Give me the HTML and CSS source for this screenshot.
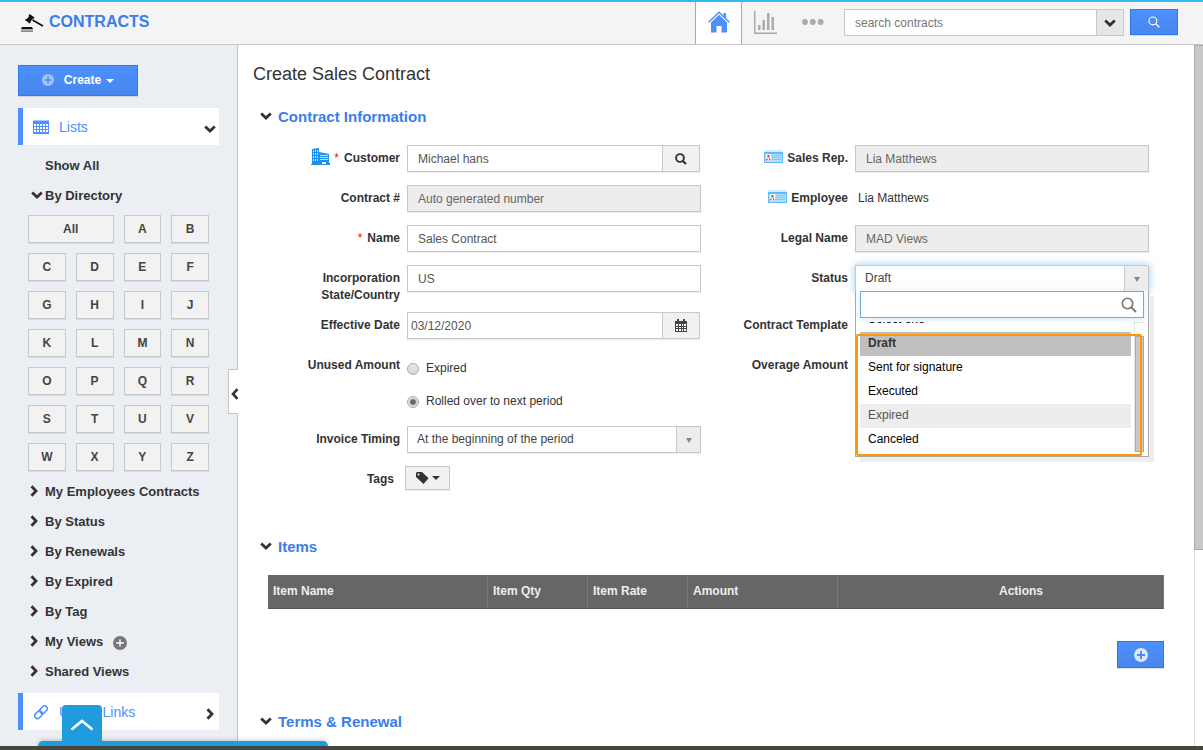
FILE: index.html
```html
<!DOCTYPE html>
<html lang="en">
<head>
<meta charset="utf-8">
<title>Contracts - Create Sales Contract</title>
<link rel="stylesheet" href="styles.css">
</head>
<body>
<svg class="sprite" aria-hidden="true">
  <symbol id="chev-down" viewBox="0 0 12 8"><path d="M1.2 1.5 6 6 10.8 1.5" fill="none" stroke="currentColor" stroke-width="2.8"/></symbol>
  <symbol id="chev-right" viewBox="0 0 8 12"><path d="M1.5 1.2 6 6 1.5 10.8" fill="none" stroke="currentColor" stroke-width="2.8"/></symbol>
  <symbol id="plus" viewBox="0 0 14 14"><path fill-rule="evenodd" fill="currentColor" d="M7 0a7 7 0 1 1 0 14A7 7 0 0 1 7 0zM6 3v3H3v2h3v3h2V8h3V6H8V3z"/></symbol>
  <symbol id="plus-thin" viewBox="0 0 14 14"><circle cx="7" cy="7" r="7" fill="currentColor"/><path d="M7 3.200v7.600M3.200 7h7.600" stroke="#fff" stroke-width="1.300"/></symbol>
  <symbol id="lens" viewBox="0 0 16 16"><circle cx="6.5" cy="6.5" r="5.2" fill="none" stroke="currentColor" stroke-width="1.6"/><path d="m10.5 10.5 4.5 4.5" stroke="currentColor" stroke-width="1.8"/></symbol>
  <symbol id="card" viewBox="0 0 19 13">
    <path fill="#d6eefc" d="M0 0h19v3H0z"/><path fill="#5bbcff" d="M0 2h19v11H0z"/><path fill="#aee0ff" d="M1 4h17v8H1z"/>
    <path fill="#fff" d="M2 4h5v7H2z"/><path fill="#b5504a" d="M3.500 5h2v2h-2zM2 9h1.500v1.500H2zM5 9h1.500v1.500H5z"/><path fill="#e6b8a8" d="M3 7h3v2H3z"/>
    <path fill="#7cc8fb" d="M8 5h9v1H8zM8 7h9v1H8zM8 9h9v1H8z"/>
  </symbol>
</svg>
<div class="app">
  <header class="topbar">
    <a class="brand" href="#">
      <svg width="24" height="19" viewBox="0 0 24 19" aria-hidden="true"><path fill="#111" d="m9.500 1 5 3.500-1 1.500-.8-.3-2.200 3 .2.800-1 1-4.700-3.500 1-1.300.9.200L9 3.200l-.3-1z"/><path d="m12.500 7 10.500 6" stroke="#111" stroke-width="1.800"/><path fill="#111" d="M2 14h10l1 2H1z"/><path fill="#aaa" d="M1 16h12v2H1z"/><path fill="#444" d="M1 18h12v.6H1z"/></svg>
      <span>CONTRACTS</span>
    </a>
    <nav class="tabs">
      <a class="tab tab-home" href="#" aria-label="Home"><svg width="22" height="22" viewBox="0 0 22 22"><path fill="#4d90fe" d="M11 3.500 19 11v10.500h-5.500V15h-5v6.500H3V11zM15.500 2H18v6l-2.500-2.400z"/><path fill="none" stroke="#4d90fe" stroke-width="1.500" d="M.6 11.200 11 1.200l10.400 10"/><path fill="none" stroke="#fff" d="M1.500 12.500 11 3.200l9.500 9.300"/></svg></a>
      <a class="tab" href="#" aria-label="Reports"><svg width="23" height="24" viewBox="0 0 23 24"><path fill="#aaa" d="M0 1h1.500v21.500H23V24H0zM4 15h2.500v5H4zM8.500 10H11v10H8.500zM13 3h2.500v17H13zM17.500 7H20v13h-2.500z"/></svg></a>
      <a class="tab" href="#" aria-label="More"><svg width="22" height="6" viewBox="0 0 22 6" fill="#aaa"><circle cx="3" cy="3" r="2.900"/><circle cx="10.800" cy="3" r="2.900"/><circle cx="18.600" cy="3" r="2.900"/></svg></a>
    </nav>
    <form class="search">
      <input class="search-input" type="text" placeholder="search contracts" aria-label="Search contracts">
      <button class="search-more" type="button" aria-label="Search options"><svg width="12" height="8"><use href="#chev-down"/></svg></button>
      <button class="btn-blue search-go" type="button" aria-label="Search"><svg width="12" height="12"><use href="#lens"/></svg></button>
    </form>
  </header>

  <div class="body">
    <aside class="sidebar">
      <button class="btn-blue create" type="button"><svg class="faded" width="12" height="12"><use href="#plus"/></svg><span>Create</span><i class="caret"></i></button>
      <a class="panel-link" href="#"><svg width="16" height="14" viewBox="0 0 16 14" aria-hidden="true"><path fill="#4d90fe" d="M0 0h16v14H0z"/><path fill="#a8c8ff" d="M0 0h16v1H0z"/><path fill="#fff" d="M1 4h2v2H1zM4 4h2v2H4zM7 4h2v2H7zM10 4h2v2h-2zM13 4h2v2h-2zM1 7h2v2H1zM4 7h2v2H4zM7 7h2v2H7zM10 7h2v2h-2zM13 7h2v2h-2zM1 10h2v2H1zM4 10h2v2H4zM7 10h2v2H7zM10 10h2v2h-2zM13 10h2v2h-2z"/></svg><span>Lists</span><svg class="end" width="12" height="8"><use href="#chev-down"/></svg></a>
      <nav class="tree">
        <a class="tree-item" href="#"><span class="arrow"></span>Show All</a>
        <a class="tree-item" href="#"><span class="arrow"><svg width="12" height="8"><use href="#chev-down"/></svg></span>By Directory</a>
        <div class="letters">
          <button class="letter all">All</button><button class="letter">A</button><button class="letter">B</button>
          <button class="letter">C</button><button class="letter">D</button><button class="letter">E</button><button class="letter">F</button>
          <button class="letter">G</button><button class="letter">H</button><button class="letter">I</button><button class="letter">J</button>
          <button class="letter">K</button><button class="letter">L</button><button class="letter">M</button><button class="letter">N</button>
          <button class="letter">O</button><button class="letter">P</button><button class="letter">Q</button><button class="letter">R</button>
          <button class="letter">S</button><button class="letter">T</button><button class="letter">U</button><button class="letter">V</button>
          <button class="letter">W</button><button class="letter">X</button><button class="letter">Y</button><button class="letter">Z</button>
        </div>
        <a class="tree-item" href="#"><span class="arrow"><svg width="8" height="12"><use href="#chev-right"/></svg></span>My Employees Contracts</a>
        <a class="tree-item" href="#"><span class="arrow"><svg width="8" height="12"><use href="#chev-right"/></svg></span>By Status</a>
        <a class="tree-item" href="#"><span class="arrow"><svg width="8" height="12"><use href="#chev-right"/></svg></span>By Renewals</a>
        <a class="tree-item" href="#"><span class="arrow"><svg width="8" height="12"><use href="#chev-right"/></svg></span>By Expired</a>
        <a class="tree-item" href="#"><span class="arrow"><svg width="8" height="12"><use href="#chev-right"/></svg></span>By Tag</a>
        <a class="tree-item" href="#"><span class="arrow"><svg width="8" height="12"><use href="#chev-right"/></svg></span>My Views<svg class="add-view" width="14" height="14" aria-hidden="true"><use href="#plus-thin"/></svg></a>
        <a class="tree-item" href="#"><span class="arrow"><svg width="8" height="12"><use href="#chev-right"/></svg></span>Shared Views</a>
      </nav>
      <a class="panel-link" href="#"><svg width="16" height="16" viewBox="0 0 16 16" fill="none" stroke="#4d90fe" stroke-width="1.500" aria-hidden="true"><rect x="6.300" y="3" width="8.400" height="5.400" rx="2.700" transform="rotate(-45 10.500 5.700)"/><rect x="1.300" y="8" width="8.400" height="5.400" rx="2.700" transform="rotate(-45 5.500 10.700)"/></svg><span>Useful Links</span><svg class="end" width="8" height="12"><use href="#chev-right"/></svg></a>
      <button class="collapse" type="button" aria-label="Collapse sidebar"><svg width="8" height="12" viewBox="0 0 8 12"><path d="M6.500 1.200 2 6l4.500 4.800" fill="none" stroke="#333" stroke-width="2.600"/></svg></button>
    </aside>

    <main class="main">
      <h1 class="title">Create Sales Contract</h1>

      <section class="section">
        <h2 class="heading"><svg width="12" height="8"><use href="#chev-down"/></svg><span>Contract Information</span></h2>
        <form class="form">
          <div class="row">
            <label class="label" for="customer"><svg class="ico" width="19" height="17" viewBox="0 0 19 17"><path fill="#1f8fea" d="M1 1l7-1v4l10 2v9h1v2H0v-1h1z"/><path fill="#bfe0fa" d="M2 2h1v2H2zM4 2h1v2H4zM6 2h1v2H6zM2 5h1v2H2zM4 5h1v2H4zM6 5h1v2H6zM2 8h1v2H2zM4 8h1v2H4zM6 8h1v2H6zM2 11h1v2H2zM4 11h1v2H4zM6 11h1v2H6zM9 7h8v1H9zM9 9h8v1H9zM9 11h8v1H9z"/><path fill="#fff" d="M11 14h4v2h-4z"/></svg><b class="req">*</b>Customer</label>
            <div class="group"><input class="input" id="customer" type="text" value="Michael hans"><button class="addon" type="button" aria-label="Find customer"><svg width="12" height="12" viewBox="0 0 12 12"><circle cx="5" cy="5" r="3.900" fill="none" stroke="#333" stroke-width="1.900"/><path d="m8 8 3 3" stroke="#333" stroke-width="2.200"/></svg></button></div>
          </div>
          <div class="row">
            <label class="label" for="rep"><svg class="ico" width="19" height="13"><use href="#card"/></svg>Sales Rep.</label>
            <input class="input" id="rep" type="text" value="Lia Matthews" disabled>
          </div>
          <div class="row">
            <label class="label" for="number">Contract #</label>
            <input class="input" id="number" type="text" value="Auto generated number" disabled>
          </div>
          <div class="row">
            <span class="label"><svg class="ico" width="19" height="13"><use href="#card"/></svg>Employee</span>
            <span class="plain">Lia Matthews</span>
          </div>
          <div class="row">
            <label class="label" for="name"><b class="req">*</b>Name</label>
            <input class="input" id="name" type="text" value="Sales Contract">
          </div>
          <div class="row">
            <label class="label" for="legal">Legal Name</label>
            <input class="input" id="legal" type="text" value="MAD Views" disabled>
          </div>
          <div class="row">
            <label class="label" for="state">Incorporation State/Country</label>
            <input class="input" id="state" type="text" value="US">
          </div>
          <div class="row">
            <label class="label" for="status">Status</label>
            <div class="select open">
              <select id="status"><option>Draft</option><option>Sent for signature</option><option>Executed</option><option>Expired</option><option>Canceled</option></select>
              <div class="drop">
                <div class="drop-search"><input type="text" aria-label="Filter statuses"><svg width="16" height="16"><use href="#lens"/></svg></div>
                <div class="drop-body">
                  <ul class="options" role="listbox" aria-label="Status">
                    <li role="option">Select one</li>
                    <li role="option" class="selected" aria-selected="true">Draft</li>
                    <li role="option">Sent for signature</li>
                    <li role="option">Executed</li>
                    <li role="option" class="hover">Expired</li>
                    <li role="option">Canceled</li>
                  </ul>
                  <div class="drop-rail"><div class="drop-thumb"></div></div>
                </div>
                <div class="highlight"></div>
              </div>
            </div>
          </div>
          <div class="row">
            <label class="label" for="date">Effective Date</label>
            <div class="group"><input class="input date" id="date" type="text" value="03/12/2020"><button class="addon" type="button" aria-label="Pick date"><svg width="12" height="13" viewBox="0 0 12 13"><path fill="#444" d="M0 2h12v11H0zM2 0h2v3H2zM8 0h2v3H8z"/><path fill="#fff" d="M1 5h2v2H1zM4 5h2v2H4zM7 5h1v2H7zM9 5h2v2H9zM1 8h2v1H1zM4 8h2v1H4zM7 8h1v1H7zM9 8h2v1H9zM1 10h2v2H1zM4 10h2v2H4zM7 10h1v2H7zM9 10h2v2H9z"/></svg></button></div>
          </div>
          <div class="row"><span class="label">Contract Template</span></div>
          <div class="row">
            <span class="label">Unused Amount</span>
            <div class="radios">
              <label><input type="radio" name="unused">Expired</label>
              <label><input type="radio" name="unused" checked>Rolled over to next period</label>
            </div>
          </div>
          <div class="row"><span class="label">Overage Amount</span></div>
          <div class="row left">
            <label class="label" for="timing">Invoice Timing</label>
            <div class="select"><select id="timing"><option>At the beginning of the period</option></select></div>
          </div>
          <div class="row left tags">
            <span class="label">Tags</span>
            <button class="tag-btn" type="button" aria-label="Tags"><svg width="13" height="12" viewBox="0 0 13 12"><path fill="#333" fill-rule="evenodd" d="M0 1 1 0h5l6.500 6.300-5 5.600L0 5zM2.500 1.500a1 1 0 1 0 0 2 1 1 0 0 0 0-2z"/></svg><i class="caret"></i></button>
          </div>
        </form>
      </section>

      <section class="section">
        <h2 class="heading"><svg width="12" height="8"><use href="#chev-down"/></svg><span>Items</span></h2>
        <div class="items">
          <table class="table">
            <thead><tr><th class="w-name">Item Name</th><th class="w-qty">Item Qty</th><th class="w-qty">Item Rate</th><th class="w-amount">Amount</th><th class="w-blank"></th><th>Actions</th></tr></thead>
          </table>
          <button class="btn-blue add" type="button" aria-label="Add item"><svg class="bright" width="14" height="14"><use href="#plus"/></svg></button>
        </div>
      </section>

      <section class="section">
        <h2 class="heading"><svg width="12" height="8"><use href="#chev-down"/></svg><span>Terms &amp; Renewal</span></h2>
      </section>
    </main>
    <div class="rail"><div class="thumb"></div></div>
  </div>
  <footer class="footbar">
    <div class="dock"></div>
    <button class="dock-up" type="button" aria-label="Open dock"><svg width="24" height="12" viewBox="0 0 24 12"><path d="M1.500 10.500 12 2l10.500 8.500" fill="none" stroke="#fff" stroke-width="2.600"/></svg></button>
  </footer>
</div>
</body>
</html>
```
FILE: styles.css
```css
* { box-sizing: border-box; }
body {
  margin: 0;
  font: 12px/17px "Liberation Sans", Arial, sans-serif;
  color: #333;
  background: #fff;
}
a { color: inherit; text-decoration: none; }
button, input, select { font: inherit; color: inherit; margin: 0; padding: 0; border-radius: 0; }
svg { display: block; flex: none; }
.sprite { position: absolute; width: 0; height: 0; }

.app { display: flex; flex-direction: column; height: 100vh; overflow: hidden; }

/* Top bar */
.topbar {
  display: flex;
  flex: none;
  height: 45px;
  padding: 0 25px 0 20px;
  border-top: 2px solid #33b9f2;
  border-bottom: 1px solid #c8c8c8;
  background: #f4f4f4;
}
.brand { display: flex; align-items: center; gap: 5px; margin-right: auto; padding-bottom: 4px; font-size: 16px; font-weight: bold; color: #3b7de9; }
.brand svg { margin-top: 3px; }
.tabs { display: flex; margin-right: 8px; }
.tab { display: flex; align-items: center; justify-content: center; width: 47px; padding-bottom: 2px; }
.tab-home { background: #fff; border: 1px solid #aaa; border-width: 0 1px; }
.search { display: flex; padding-top: 7px; }
.search-input { width: 253px; height: 27px; padding: 0 10px; border: 1px solid #c8c8c8; background: #fff; outline: 0; }
.search-input::placeholder { color: #777; opacity: 1; }
.search-more { display: flex; align-items: center; justify-content: center; width: 27px; height: 27px; margin-right: 6px; border: 1px solid #c8c8c8; border-left: 0; background: #e6e6e6; }
.search-go { width: 48px; height: 26px; }

.btn-blue {
  display: flex;
  align-items: center;
  justify-content: center;
  border: 1px solid #3079ed;
  background: linear-gradient(#4d90fe, #4787ed);
  box-shadow: 0 1px 0 rgba(0, 0, 0, .1);
  color: #fff;
}
.caret { border: 4px solid transparent; border-top-color: currentColor; border-bottom: 0; }

.body { display: flex; flex: 1; min-height: 0; }

/* Sidebar */
.sidebar { position: relative; flex: 0 0 238px; padding: 20px 18px 0; border-right: 1px solid #c4c4c4; background: #ebeff4; }
.create { width: 120px; height: 31px; margin-bottom: 12px; gap: 5px; font-weight: bold; }
.create .faded { margin: 0 5px 2px 0; opacity: .5; }
.panel-link { display: flex; align-items: center; height: 37px; padding: 0 3px 0 10px; border-left: 5px solid #4d90fe; background: #fff; color: #4d90fe; font-size: 14px; }
.panel-link span { margin: 2px 0 0 10px; }
.panel-link .end { margin: 4px 0 0 auto; color: #333; }
.panel-link svg[width="8"].end { margin-right: 2px; }
.tree { padding: 5px 0 7px; }
.tree-item { display: flex; align-items: center; height: 30px; padding-left: 10px; font-size: 13px; font-weight: bold; }
.arrow { display: flex; justify-content: center; flex: 0 0 17px; }
.arrow svg[width="8"] { margin-right: 5px; }
.add-view { margin: 3px 0 0 10px; color: #777; }
.letters { display: grid; grid-template-columns: repeat(4, 1fr); gap: 10px; padding: 5px 10px; }
.letter { height: 28px; border: 1px solid #c8c8c8; background: #f2f2f2; box-shadow: 0 1px 0 rgba(0, 0, 0, .08); font-weight: bold; color: #444; }
.letter.all { grid-column: span 2; }
.collapse { position: absolute; right: -1px; top: 324px; display: flex; align-items: center; justify-content: center; width: 10px; height: 45px; padding: 4px 0 0 2px; border: 1px solid #c4c4c4; border-right: 0; background: #fff; }

/* Main */
.main { flex: 1; min-width: 0; padding: 17px 15px 0; overflow: hidden; }
.title { margin: 0 0 21px; font-size: 18px; line-height: 24px; font-weight: normal; }
.heading { display: flex; align-items: center; gap: 6px; margin: 0 0 18px; padding-left: 7px; font-size: 15px; line-height: 20px; color: #333; }
.heading svg { margin-bottom: 2px; }
.heading span { color: #3b7de9; }
.form { display: grid; grid-template-columns: 1fr 1fr; padding: 0 15px 31px; }
.row { display: flex; align-items: flex-start; gap: 7px; min-height: 40px; padding: 0 15px 8px 0; }
.row.left { grid-column: 1; }
.label { flex: 0 0 132px; padding-top: 5px; text-align: right; font-weight: bold; }
.ico { display: inline-block; vertical-align: middle; margin: -5px 4px 0 0; }
.req { color: #f00; font-weight: normal; margin-right: 5px; }
.input { flex: 1; min-width: 0; width: 100%; height: 27px; padding: 0 10px; border: 1px solid #c8c8c8; background: #fff; box-shadow: 0 1px 0 rgba(0, 0, 0, .07); color: #555; outline: 0; }
.input:disabled { background: #ededed; color: #666; }
.input.date { padding-left: 3px; }
.plain { padding: 5px 3px; }
.group { display: flex; flex: 1; min-width: 0; padding-right: 1px; }
.addon { display: flex; align-items: center; justify-content: center; width: 37px; height: 27px; border: 1px solid #c8c8c8; border-left: 0; background: #f1f1f1; box-shadow: 0 1px 0 rgba(0, 0, 0, .07); }
.select { position: relative; flex: 1; min-width: 0; }
.select select {
  appearance: none;
  display: block;
  width: 100%;
  height: 27px;
  padding: 0 9px;
  border: 1px solid #c8c8c8;
  background: linear-gradient(to left, #ededed 23px, #c8c8c8 23px, #c8c8c8 24px, #fff 24px);
  box-shadow: 0 1px 0 rgba(0, 0, 0, .07);
  color: #444;
  outline: 0;
}
.select::after { content: ""; position: absolute; right: 9px; top: 12px; border: 3px solid transparent; border-top: 5px solid #888; border-bottom: 0; pointer-events: none; }
.select.open select { box-shadow: 0 0 8px rgba(82, 168, 236, .6); }
.drop { position: absolute; z-index: 2; top: 26px; left: 0; right: 0; padding: 0 4px 4px; border: 1px solid #aaa; border-top: 0; background: #fff; box-shadow: 5px 5px 0 #eee; color: #000; }
.drop-search { display: flex; align-items: center; height: 27px; margin-bottom: 4px; padding-right: 6px; border: 1px solid #66afe9; box-shadow: 0 2px 8px rgba(102, 175, 233, .25); color: #777; }
.drop-search input { flex: 1; min-width: 0; height: 100%; padding: 0 6px; border: 0; background: none; outline: 0; }
.drop-body { display: flex; gap: 3px; height: 130px; }
.options { display: flex; flex: 1; flex-direction: column; justify-content: flex-end; margin: 0; padding: 0; overflow: hidden; list-style: none; background: #fff; position: relative; }
.options li { flex: none; height: 24px; padding-left: 8px; line-height: 22px; }
.options .selected { background: #bfbfbf; color: #333; font-weight: bold; }
.options .hover { background: #ededed; color: #555; }
.drop-rail { display: flex; flex-direction: column; justify-content: flex-end; width: 10px; border: 1px solid #e4e4e4; border-width: 1px 0 0 1px; background: #fff; position: relative; }
.drop-thumb { height: 90%; border: 1px solid #aaa; background: #c8c8c8; }
.highlight { position: absolute; inset: 43px 6px 0 0; border: 2px solid #ff9800; border-radius: 2px; pointer-events: none; }

.radios { display: flex; flex-direction: column; gap: 16px; padding: 8px 0; }
.radios label { display: flex; align-items: center; gap: 7px; }
.radios input { appearance: none; width: 12px; height: 12px; border: 1px solid #aaa; border-radius: 50%; background: linear-gradient(#e8e8e8, #d8d8d8); }
.radios input:checked { background: radial-gradient(circle, #666 2px, #e4e4e4 4px); }
.tags { gap: 11px; }
.tags .label { flex-basis: 126px; }
.tag-btn { display: flex; align-items: center; justify-content: center; gap: 3px; width: 45px; height: 24px; border: 1px solid #c8c8c8; background: #f1f1f1; box-shadow: 0 1px 0 rgba(0, 0, 0, .07); }

.items { padding: 0 15px 44px; }
.table { width: 100%; table-layout: fixed; border-collapse: separate; border-spacing: 0; background: #666; color: #eee; }
.table th { height: 34px; padding: 0 5px 1px; border-right: 1px solid #7a7a7a; border-bottom: 1px solid #555; text-align: left; }
.table .w-name { width: 220px; }
.table .w-qty { width: 100px; }
.table .w-amount { width: 150px; }
.table .w-blank { width: 156px; border-right: 0; }
.add { width: 47px; height: 27px; margin: 32px 0 0 auto; }
.bright { opacity: .8; }

.rail { display: flex; flex-direction: column; flex: 0 0 9px; border-left: 1px solid #ddd; background: #fff; }
.thumb { height: 72%; margin-left: -1px; border: 1px solid #aaa; border-right: 0; background: #c9c9c9; }

/* Dock at the bottom edge */
.footbar { position: relative; flex: none; height: 4px; background: #454840; }
.dock { position: absolute; left: 38px; bottom: 4px; width: 290px; height: 5px; border-radius: 5px 5px 0 0; background: #1f9bde; box-shadow: 0 -1px 4px rgba(0, 0, 0, .2); }
.dock-up { position: absolute; left: 62px; bottom: 4px; display: flex; justify-content: center; width: 40px; height: 41px; padding-top: 14px; border: 0; border-radius: 4px 4px 0 0; background: #1f9bde; }
```
